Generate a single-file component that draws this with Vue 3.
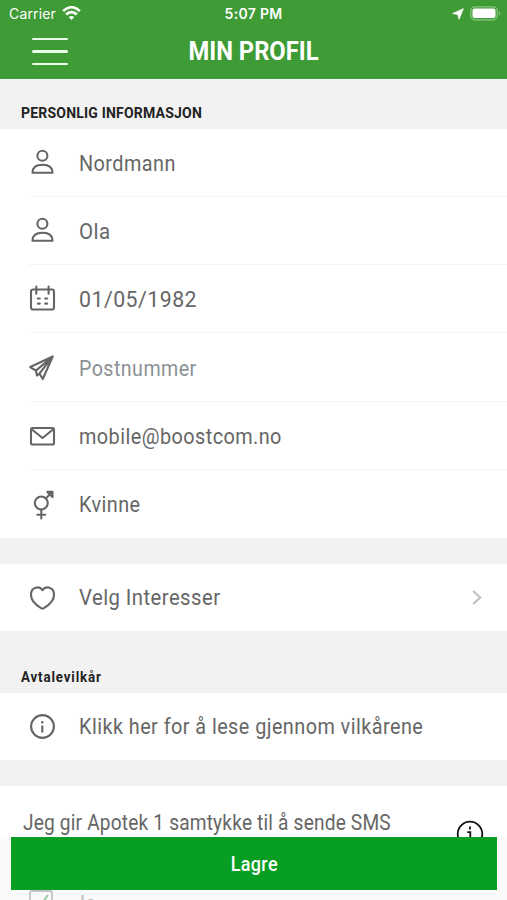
<script setup>
const fields = [
  { icon: 'person', text: 'Nordmann' },
  { icon: 'person', text: 'Ola', size: 'w-ola' },
  { icon: 'calendar', text: '01/05/1982', size: 'w-date' },
  { icon: 'plane', text: 'Postnummer', size: 'w-post', muted: true },
  { icon: 'mail', text: 'mobile@boostcom.no' },
  { icon: 'gender', text: 'Kvinne' },
]
</script>

<template>
  <main class="screen">
    <header class="header">
      <div class="status">
        <div class="carrier">
          <span>Carrier</span>
          <svg width="19" height="15" viewBox="0 0 19 15" fill="none" stroke="#fff" stroke-width="2.7">
            <path d="M1.2 5.2C6-.1 13 -.1 17.8 5.2" />
            <path d="M4.2 8.5C7.2 5.3 11.8 5.3 14.8 8.5" />
            <path d="M6.7 11.1Q9.5 8.7 12.3 11.1L9.5 14z" fill="#fff" stroke="none" />
          </svg>
        </div>
        <span class="time">5:07 PM</span>
        <div class="indicators">
          <svg width="12" height="12" viewBox="0 0 12 12" fill="#fff" stroke="#fff" stroke-width=".8" stroke-linejoin="round"><path d="M11.3.7 7 11.2 5.9 6.4.7 5.6z" /></svg>
          <svg width="31" height="15" viewBox="0 0 31 15">
            <rect x=".8" y=".8" width="26.4" height="13" rx="4" fill="none" stroke="#8bc585" stroke-width="1.2" />
            <rect x="2.5" y="2.6" width="23" height="9.5" rx="2.2" fill="#fff" />
            <path d="M28.8 5v4.7q1.5-.8 1.5-2.35T28.8 5" fill="#8bc585" />
          </svg>
        </div>
      </div>
      <div class="nav">
        <div class="menu"><i></i><i></i><i></i></div>
        <h1>MIN PROFIL</h1>
      </div>
    </header>

    <h2 class="label personal"><span>PERSONLIG INFORMASJON</span></h2>
    <section class="list">
      <div v-for="(field, index) in fields" :key="index" class="row field">
        <svg class="icon" width="30" height="32" viewBox="0 0 30 32">
          <template v-if="field.icon === 'person'">
            <circle cx="15.4" cy="8.8" r="5" />
            <path d="M5.5 25.8q0-8 10-8t10 8z" />
          </template>
          <template v-else-if="field.icon === 'calendar'">
            <rect x="4" y="6.5" width="23" height="20" rx="2" />
            <path d="M9.3 3.5v7.2M21.6 3.5v7.2M10.8 15.5h2M18.2 15.5h2M10.8 20.6h2M18.2 20.6h2" />
          </template>
          <template v-else-if="field.icon === 'plane'">
            <path d="M25.7 4.5 3.2 15 8.9 18.6 10 23.5 12.4 21.6 15.8 27zM8.9 18.6 25.7 4.5 12.4 21.6" />
          </template>
          <template v-else-if="field.icon === 'mail'">
            <rect x="4" y="8" width="23" height="16.5" rx="1.5" />
            <path d="m5 9.5 10.5 8.5L26 9.5" />
          </template>
          <template v-else>
            <circle cx="14.3" cy="15" r="6.5" />
            <path d="m19 10.3 5-5M14.3 21.5v9M10.4 26.8h7.8" />
            <path d="M20.3 3.9h5.2v5.2z" fill="#656565" />
          </template>
        </svg>
        <span class="text" :class="[field.size, { muted: field.muted }]">{{ field.text }}</span>
      </div>
    </section>

    <section class="row interests">
      <svg class="icon" width="30" height="32" viewBox="0 0 30 32">
        <path d="M15.5 8.2C12.2 3.2 4 5 4 12.7c0 6.5 6.3 11.2 10.1 13.4q1.4.8 2.8 0C20.7 23.9 27 19.2 27 12.7 27 5 18.8 3.2 15.5 8.2z" />
      </svg>
      <span class="text w-interests">Velg Interesser</span>
      <svg class="chevron" width="10" height="16" viewBox="0 0 10 16"><path d="m1.2 1 7 6.5-7 6.5" /></svg>
    </section>

    <h2 class="label terms"><span>Avtalevilkår</span></h2>
    <section class="row terms-row">
      <svg class="icon info" width="30" height="32" viewBox="0 0 30 32">
        <circle cx="15.5" cy="15.5" r="11.4" />
        <path d="M15.3 14.4v7M15.3 10v2.5" />
      </svg>
      <span class="text">Klikk her for å lese gjennom vilkårene</span>
    </section>

    <section class="consent">
      <div class="consent-head">
        <span class="text w-consent">Jeg gir Apotek 1 samtykke til å sende SMS</span>
        <svg class="consent-info" width="28" height="28" viewBox="0 0 28 28">
          <circle cx="14" cy="14" r="12.3" /><path d="M11.3 12.2h3v9M14 6.4v3" />
        </svg>
      </div>
      <div class="choice">
        <svg width="24" height="24" viewBox="0 0 24 24">
          <rect x="1" y="1" width="22" height="22" rx="2" fill="none" stroke="#777" stroke-width="1.8" />
          <path d="m5 13 5 5L19 5" fill="none" stroke="#2f9a34" stroke-width="2.2" />
        </svg>
        <span class="text">Ja</span>
      </div>
    </section>

    <footer class="save-bar"><button type="button"><span>Lagre</span></button></footer>
  </main>
</template>

<style>
body { margin: 0; overflow: hidden; }
</style>

<style scoped>
.screen {
  position: relative;
  display: flex;
  flex-direction: column;
  width: 507px;
  height: 900px;
  overflow: hidden;
  background: #f2f2f2;
  font-family: Roboto, "Noto Sans", sans-serif;
}
.header { flex: none; height: 79px; background: #3f9b35; color: #fff; }
.status {
  display: grid;
  grid-template-columns: 1fr auto 1fr;
  align-items: center;
  height: 27px;
  padding: 0 6px 0 9px;
  font-family: Inter, sans-serif;
  font-size: 14px;
}
.carrier { display: flex; align-items: center; gap: 6px; letter-spacing: 0.15px; }
.time { margin-right: 3px; font-weight: 600; letter-spacing: 0.3px; }
.indicators { display: flex; justify-content: flex-end; align-items: center; gap: 6px; }
.nav {
  display: grid;
  grid-template-columns: 36px 1fr 36px;
  align-items: center;
  height: 49px;
  padding: 0 32px;
}
.menu { display: grid; gap: 10px; }
.menu i { height: 2.3px; border-radius: 2px; background: #e9fce8; }
h1 { margin: 0; font-size: 25px; font-weight: 700; line-height: 30px; text-align: center; transform: scaleX(0.95); }
.label {
  box-sizing: border-box;
  flex: none;
  margin: 0;
  padding-left: 21px;
  color: #222;
  font-size: 15px;
  font-weight: 700;
  line-height: 20px;
}
.label span { display: inline-block; transform-origin: left; }
.personal { height: 50px; padding-top: 24px; }
.personal span { letter-spacing: 0.2px; transform: scaleX(0.935); }
.terms { height: 62px; padding-top: 36px; font-size: 14px; }
.terms span { letter-spacing: 0.9px; transform: scaleX(0.95); }
.list { flex: none; height: 409px; display: grid; grid-template-rows: repeat(6, 1fr); background: #fff; }
.row { position: relative; display: flex; align-items: center; padding-left: 27px; background: #fff; }
.field:not(:last-child)::after {
  content: "";
  position: absolute;
  right: 0;
  bottom: 0;
  left: 28px;
  height: 1px;
  background: #f5f5f5;
}
.icon { flex: none; margin-right: 22px; fill: none; stroke: #656565; stroke-width: 2.1; stroke-linejoin: round; stroke-linecap: round; }
.info { stroke-linecap: butt; }
.text {
  padding-top: 1px;
  color: #666;
  font-size: 22px;
  letter-spacing: 0.5px;
  line-height: 28px;
  white-space: nowrap;
  transform: scaleX(0.901);
  transform-origin: left;
}
.field:nth-child(n + 4) .text { padding-top: 2px; }
.w-ola { transform: scaleX(0.93); }
.w-date { transform: scaleX(0.967); }
.w-post { transform: scaleX(0.893); }
.w-interests { transform: scaleX(0.921); }
.w-consent { letter-spacing: 0.2px; transform: scaleX(0.869); }
.muted { color: #8b9296; }
.interests { flex: none; height: 67px; margin-top: 26px; }
.chevron { margin: 0 25px 0 auto; fill: none; stroke: #c2c2c2; stroke-width: 2.2; }
.terms-row { flex: none; height: 67px; }
.consent { flex: none; margin-top: 26px; height: 114px; background: #fff; }
.consent-head { display: flex; justify-content: space-between; box-sizing: border-box; height: 62px; padding: 22px 23px 0; }
.consent-head .text { flex: none; width: 420px; }
.consent-info { flex: none; margin: 12px 0 0 auto; fill: none; stroke: #111; stroke-width: 1.8; }
.choice { display: flex; align-items: center; gap: 21px; padding: 40px 29px 0; height: 28px; }
.choice .text { padding-top: 4px; }
.save-bar {
  position: absolute;
  right: 0;
  bottom: 0;
  left: 0;
  height: 63px;
  box-sizing: border-box;
  padding: 0 10px 10px 11px;
  background: rgb(246 246 246 / 60%);
}
button {
  display: block;
  width: 100%;
  height: 53px;
  padding: 0;
  border: 0;
  background: #079e23;
  color: #fff;
  font-family: inherit;
  font-size: 20px;
  font-weight: 500;
}
button span { display: inline-block; letter-spacing: 0.4px; transform: scaleX(0.9); }
</style>
